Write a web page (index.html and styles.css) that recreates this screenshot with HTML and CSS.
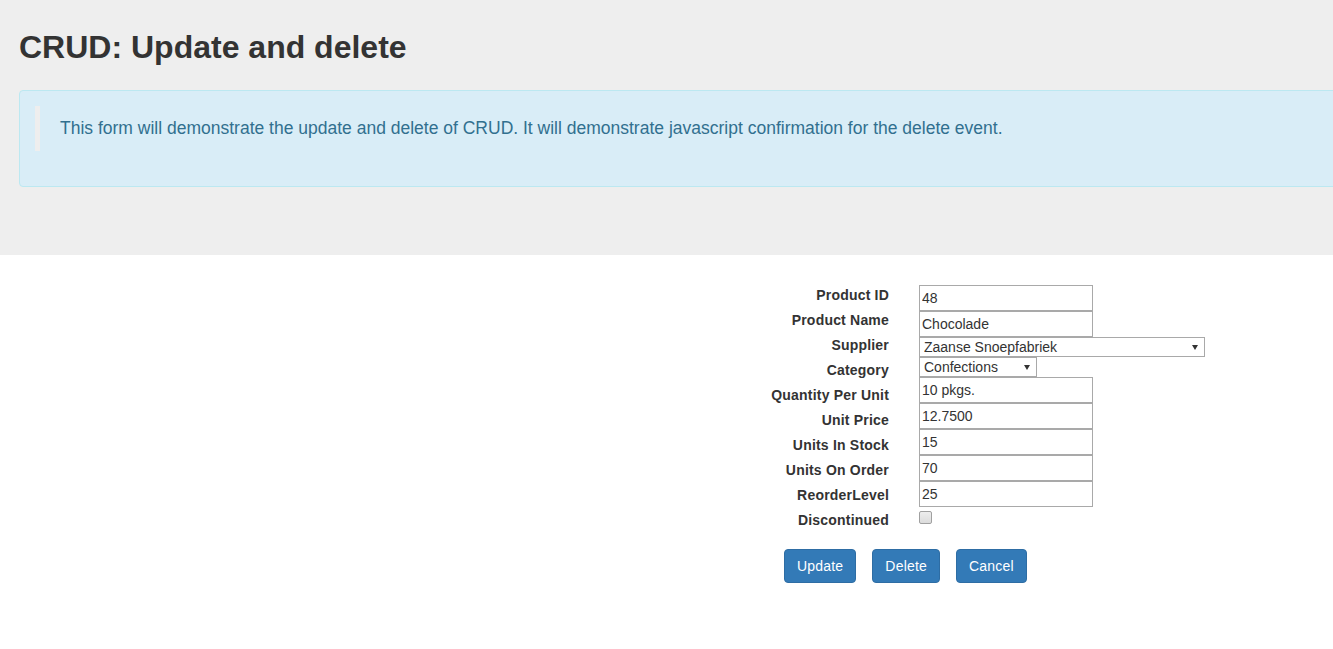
FILE: index.html
```html
<!DOCTYPE html>
<html lang="en">
<head>
<meta charset="utf-8">
<title>CRUD: Update and delete</title>
<link rel="stylesheet" href="styles.css">
</head>
<body>
<div class="jumbotron">
  <h1 class="title">CRUD: Update and delete</h1>
  <div class="alert-info">
    <blockquote class="note">This form will demonstrate the update and delete of CRUD. It will demonstrate javascript confirmation for the delete event.</blockquote>
  </div>
</div>
<form class="product-form">
  <div class="fields">
    <div class="labels">
      <label>Product ID</label>
      <label>Product Name</label>
      <label>Supplier</label>
      <label>Category</label>
      <label>Quantity Per Unit</label>
      <label>Unit Price</label>
      <label>Units In Stock</label>
      <label>Units On Order</label>
      <label>ReorderLevel</label>
      <label>Discontinued</label>
    </div>
    <div class="inputs">
      <input class="text" type="text" value="48">
      <input class="text" type="text" value="Chocolade">
      <div class="select-wrap supplier"><select><option>Zaanse Snoepfabriek</option></select></div>
      <div class="select-wrap category"><select><option>Confections</option></select></div>
      <input class="text" type="text" value="10 pkgs.">
      <input class="text" type="text" value="12.7500">
      <input class="text" type="text" value="15">
      <input class="text" type="text" value="70">
      <input class="text" type="text" value="25">
      <input class="check" type="checkbox">
    </div>
  </div>
  <div class="actions">
    <button type="button" class="btn">Update</button>
    <button type="button" class="btn">Delete</button>
    <button type="button" class="btn">Cancel</button>
  </div>
</form>
</body>
</html>
```

FILE: styles.css
```css
html, body {
  margin: 0;
  padding: 0;
}
body {
  font-family: "Liberation Sans", Arial, sans-serif;
  font-size: 14px;
  line-height: 20px;
  color: #333;
  background: #fff;
  overflow-x: hidden;
}
.jumbotron {
  background: #eeeeee;
  padding: 30px 0 68px 19px;
  overflow: hidden;
}
.title {
  margin: 0 0 25px 0;
  font-size: 32px;
  line-height: 35px;
  font-weight: bold;
  color: #333;
}
.alert-info {
  background: #d9edf7;
  border: 1px solid #bce8f1;
  border-radius: 4px;
  padding: 15px;
  margin-right: -30px;
  color: #31708f;
}
.note {
  margin: 0 0 20px 0;
  padding: 10px 20px;
  border-left: 5px solid #eee;
  font-size: 17.5px;
  line-height: 25px;
}
.product-form {
  padding-left: 740px;
  padding-top: 28px;
}
.fields {
  display: flex;
  gap: 30px;
}
.labels {
  display: flex;
  flex-direction: column;
  align-items: flex-end;
  width: 149px;
}
.labels label {
  font-weight: bold;
  line-height: 25px;
  height: 25px;
  color: #333;
  letter-spacing: 0.2px;
  white-space: nowrap;
}
.inputs {
  display: flex;
  flex-direction: column;
  align-items: flex-start;
  padding-top: 2px;
}
.text {
  box-sizing: border-box;
  width: 174px;
  height: 26px;
  margin: 0;
  padding: 0 2px;
  border: 1px solid #a9a9a9;
  font-family: "Liberation Sans", Arial, sans-serif;
  font-size: 14px;
  color: #333;
  background: #fff;
  outline: none;
}
.select-wrap {
  position: relative;
  height: 20px;
}
.select-wrap select {
  box-sizing: border-box;
  height: 20px;
  margin: 0;
  padding: 0 0 0 4px;
  border: 1px solid #a9a9a9;
  border-radius: 0;
  background: #fff;
  font-family: "Liberation Sans", Arial, sans-serif;
  font-size: 14px;
  line-height: 18px;
  color: #333;
  -webkit-appearance: none;
  appearance: none;
  outline: none;
}
.supplier select { width: 286px; }
.category select { width: 118px; }
.select-wrap::after {
  content: "";
  position: absolute;
  right: 7px;
  top: 8px;
  border-left: 3.5px solid transparent;
  border-right: 3.5px solid transparent;
  border-top: 5px solid #333;
  pointer-events: none;
}
.check {
  -webkit-appearance: none;
  appearance: none;
  box-sizing: border-box;
  width: 13px;
  height: 13px;
  margin: 4px 0 0 0;
  border: 1px solid #a0a0a0;
  border-radius: 2px;
  background: linear-gradient(#ededed, #dcdcdc);
}
.actions {
  display: flex;
  gap: 16px;
  margin-top: 16px;
  padding-left: 44px;
}
.btn {
  box-sizing: border-box;
  height: 34px;
  padding: 6px 12px;
  border: 1px solid #2e6da4;
  border-radius: 4px;
  background: #337ab7;
  color: #fff;
  font-family: "Liberation Sans", Arial, sans-serif;
  font-size: 14px;
  line-height: 20px;
  letter-spacing: 0.2px;
  cursor: pointer;
}
```
